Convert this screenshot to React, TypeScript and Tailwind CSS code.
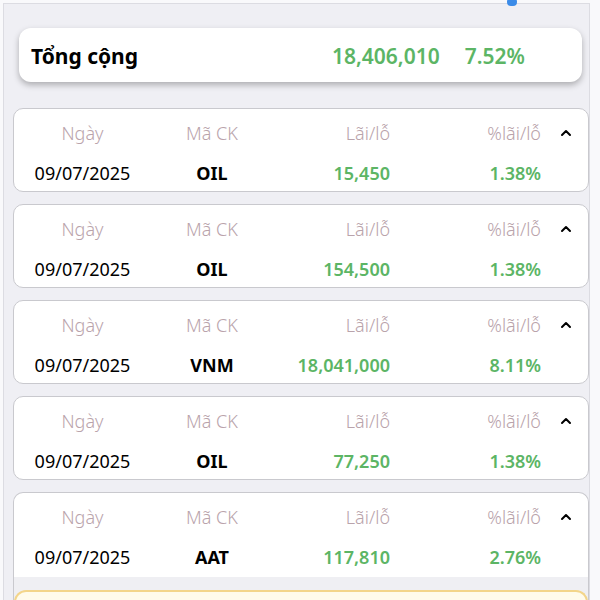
import { ChevronUp } from "lucide-react";

type Row = { date: string; code: string; pnl: string; pct: string };

const rows: Row[] = [
  { date: "09/07/2025", code: "OIL", pnl: "15,450", pct: "1.38%" },
  { date: "09/07/2025", code: "OIL", pnl: "154,500", pct: "1.38%" },
  { date: "09/07/2025", code: "VNM", pnl: "18,041,000", pct: "8.11%" },
  { date: "09/07/2025", code: "OIL", pnl: "77,250", pct: "1.38%" },
  { date: "09/07/2025", code: "AAT", pnl: "117,810", pct: "2.76%" },
];

const TradeCard = ({ row, last }: { row: Row; last?: boolean }) => (
  <div
    className={`shrink-0 border border-[#c9c9ce] bg-white ${
      last ? "rounded-t-[10px] border-b-0" : "rounded-[10px]"
    }`}
  >
    <div className={`flex flex-col gap-2 pt-2 ${last ? "pb-[4px]" : "pb-[2px]"}`}>
      <div className="flex h-8 items-center text-[18px] font-light leading-8 text-[#b9a3ab]">
        <div className="w-[137px] text-center">Ngày</div>
        <div className="w-[122px] text-center">Mã CK</div>
        <div className="w-[117px] text-right">Lãi/lỗ</div>
        <div className="w-[151px] text-right">%lãi/lỗ</div>
        <div className="flex w-[46px] justify-center pl-1">
          <ChevronUp size={16} strokeWidth={3} className="text-black" />
        </div>
      </div>
      <div className="flex h-8 items-center text-[18px] leading-8">
        <div className="w-[137px] text-center text-black">{row.date}</div>
        <div className="w-[122px] text-center font-bold text-black">{row.code}</div>
        <div className="w-[117px] text-right font-semibold text-[#5cb565]">{row.pnl}</div>
        <div className="w-[151px] text-right font-semibold text-[#5cb565]">{row.pct}</div>
        <div className="w-[46px]" />
      </div>
    </div>
    {last && (
      <div className="bg-[#efeff3] pt-[13px]">
        <div className="h-[40px] rounded-t-[12px] border-2 border-b-0 border-[#f3d58a] bg-[#fffbeb]" />
      </div>
    )}
  </div>
);

export default function App() {
  return (
    <div
      className="h-[600px] w-[600px] overflow-hidden bg-[#f9f9fb]"
      style={{ fontFamily: '"Noto Sans", "Open Sans", sans-serif' }}
    >
      <div className="relative ml-[3px] mt-[3px] flex h-[620px] w-[587px] flex-col border-l border-r border-t border-[#dcdce2] bg-[#efeff4]">
        <div className="absolute -top-[6px] left-[503px] h-[8px] w-[10px] rounded-full bg-[#3b8be8]" />
        <div className="ml-[15px] mt-[24px] flex h-[54px] w-[563px] shrink-0 items-center rounded-[12px] bg-white pl-[12px] pr-[57px] pt-[4px] shadow-[0_3px_6px_rgba(0,0,0,0.28)]">
          <div className="flex-1 text-[21px] font-bold text-black">Tổng cộng</div>
          <div className="text-[21px] font-semibold text-[#5cb565]">18,406,010</div>
          <div className="ml-[25px] text-[21px] font-semibold text-[#5cb565]">7.52%</div>
        </div>
        <div className="ml-[9px] mt-[26px] flex w-[576px] shrink-0 flex-col gap-3">
          {rows.map((r, i) => (
            <TradeCard key={i} row={r} last={i === rows.length - 1} />
          ))}
        </div>
      </div>
    </div>
  );
}
